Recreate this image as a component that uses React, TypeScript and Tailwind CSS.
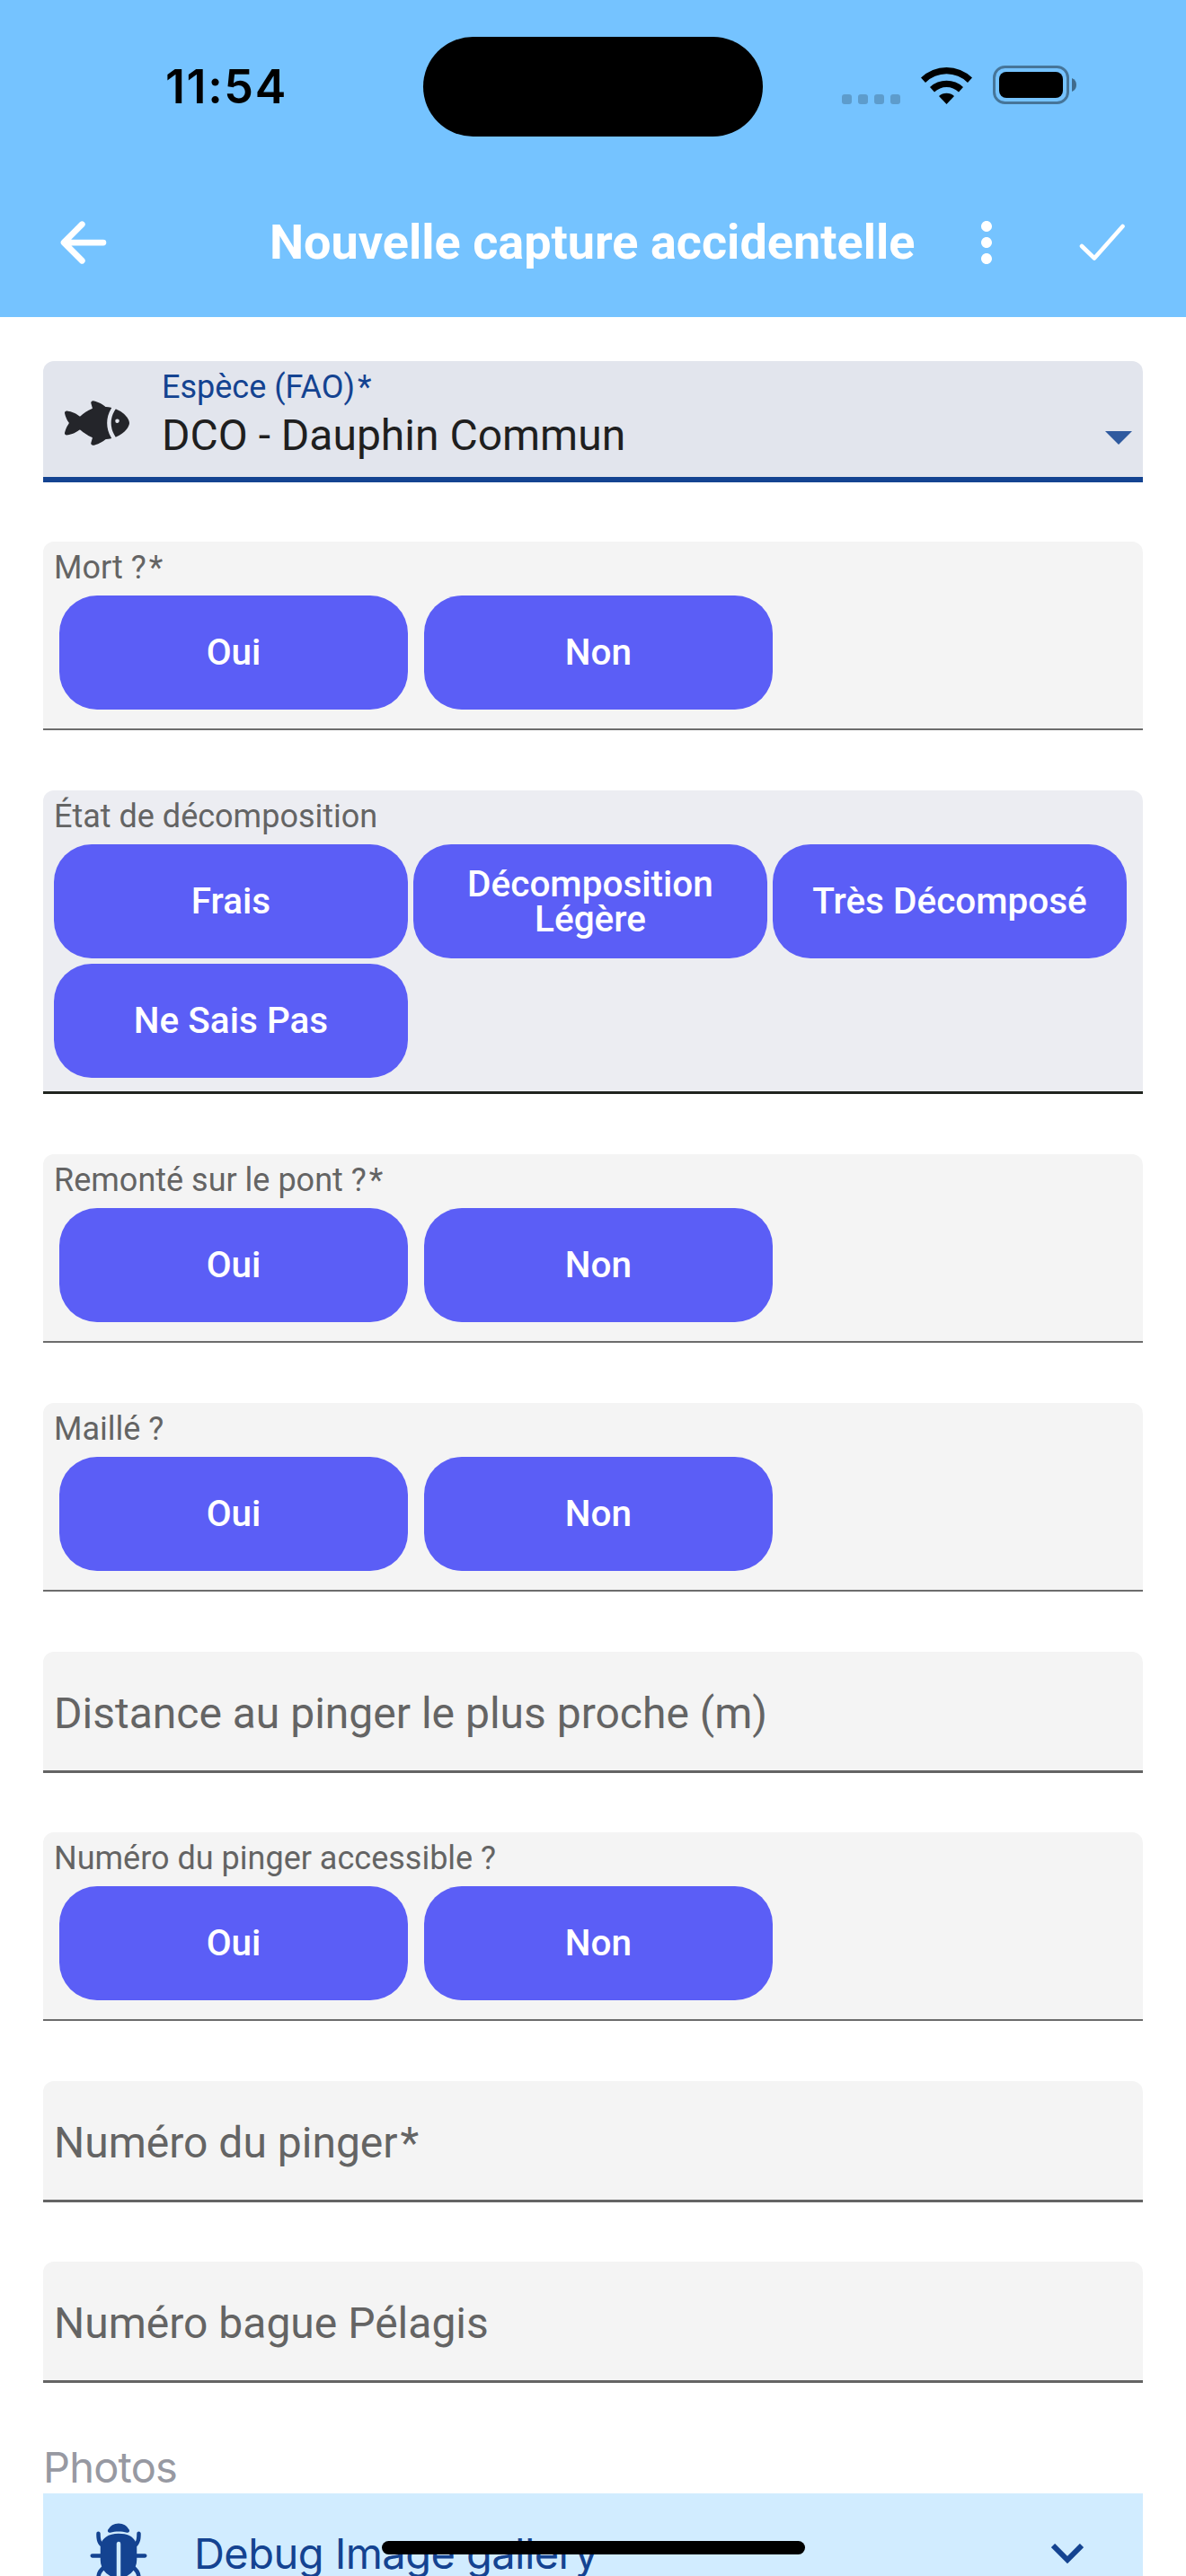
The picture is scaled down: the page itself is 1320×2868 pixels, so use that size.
import { IoArrowBack, IoFish, IoBug } from "react-icons/io5";
import { MdMoreVert } from "react-icons/md";

function StatusBar() {
  return (
    <div className="relative flex h-[187px] items-start">
      <span className="ml-[184px] mt-[65px] font-['Inter'] text-[52px] leading-[64px] font-semibold tracking-[1.6px] text-black">
        11:54
      </span>
      <div className="absolute left-[471px] top-[41px] h-[111px] w-[378px] rounded-full bg-black" />
      <div className="absolute left-[937px] top-[73px] flex items-end">
        <div className="flex gap-[7px]">
          {[0, 1, 2, 3].map((i) => (
            <span key={i} className="size-[11px] rounded-[3px] bg-black/20" />
          ))}
        </div>
        <svg className="ml-[23px] h-[42px] w-[57px]" viewBox="0 0 57 42">
          <path d="M0 12.6A41 41 0 0 1 57 12.6L52 18A33.5 33.5 0 0 0 5 18Z" />
          <path d="M10 23A27 27 0 0 1 47 23L42 28.5A19.5 19.5 0 0 0 15 28.5Z" />
          <path d="M20 33A13 13 0 0 1 37 33L28.5 42Z" />
        </svg>
        <svg className="ml-[23px] h-[43px] w-[93px]" viewBox="0 0 93 43">
          <rect x="1.5" y="1.5" width="82" height="40" rx="12" fill="none" stroke="#000" strokeOpacity=".4" strokeWidth="3" />
          <rect x="7" y="7" width="71" height="29" rx="8" />
          <path d="M88 14C91.5 15.5 93 18 93 21.5S91.5 27.5 88 29Z" opacity=".45" />
        </svg>
      </div>
    </div>
  );
}

function Header() {
  return (
    <header className="h-[353px] bg-[#75c3ff]">
      <StatusBar />
      <div className="flex h-[166px] items-center pl-[57px] text-white">
        <IoArrowBack className="size-[72px] shrink-0" />
        <h1 className="ml-[171px] w-[762px] text-[54px] font-bold leading-[64px] whitespace-nowrap">
          Nouvelle capture accidentelle
        </h1>
        <MdMoreVert className="size-[72px] shrink-0" />
        <svg
          className="ml-[67px] h-[42px] w-[52px]"
          viewBox="0 0 52 42"
          fill="none"
          stroke="#fff"
          strokeWidth="4.6"
          strokeLinecap="round"
          strokeLinejoin="round"
        >
          <path d="M3 25L17 38.5L48.5 3" />
        </svg>
      </div>
    </header>
  );
}

const choiceButton =
  "flex h-[127px] items-center justify-center rounded-[42px] bg-[#5b5ef6] px-[30px] text-center text-[40.5px] font-medium leading-[39px] text-white";

function Label({ text, required }: { text: string; required?: boolean }) {
  return (
    <>
      {text}
      {required && <span className="ml-[3px]">*</span>}
    </>
  );
}

type FieldProps = { label: string; required?: boolean; className?: string };

function YesNoField({ label, required, className = "" }: FieldProps) {
  return (
    <div className={"h-[210px] rounded-t-[12px] border-b-2 border-[#6c6c6c] bg-[#f4f4f4] px-[12px] pt-[6px] " + className}>
      <div className="h-[54px] text-[36px] leading-[46px] text-[#646464]">
        <Label text={label} required={required} />
      </div>
      <div className="flex gap-[18px] pl-[6px]">
        <button className={choiceButton + " w-[388px]"}>Oui</button>
        <button className={choiceButton + " w-[388px]"}>Non</button>
      </div>
    </div>
  );
}

function TextField({ label, required, className = "" }: FieldProps) {
  return (
    <div
      className={
        "flex h-[135px] items-center rounded-t-[12px] border-b-3 border-[#646464] bg-[#f4f4f4] px-[12px] pt-[6px] text-[48px] leading-[60px] text-[#646464] " +
        className
      }
    >
      <Label text={label} required={required} />
    </div>
  );
}

export default function App() {
  return (
    <div className="relative h-[2868px] w-[1320px] overflow-hidden bg-white font-['Roboto',sans-serif]">
      <Header />
      <main className="flex flex-col gap-[67px] px-[48px] pt-[49px]">
        <div className="-mb-px flex h-[135px] rounded-t-[12px] border-b-6 border-[#144391] bg-[#e2e5ed] pl-[24px] pr-[12px]">
          <IoFish className="mt-[33px] size-[72px] text-[#24252a]" />
          <div className="ml-[36px] flex-1">
            <div className="mt-[6px] text-[36px] leading-[46px] text-[#144391]">
              <Label text="Espèce (FAO)" required />
            </div>
            <div className="mt-px text-[48px] leading-[60px] text-[#1f1f1f]">DCO - Dauphin Commun</div>
          </div>
          <svg className="mt-[78px] h-[15px] w-[30px]" viewBox="0 0 30 15">
            <path d="M0 0H30L15 15Z" fill="#2f5a9f" />
          </svg>
        </div>
        <YesNoField label="Mort ?" required />
        <div className="h-[338px] rounded-t-[12px] border-b-3 border-[#20241f] bg-[#ecedf2] px-[12px] pt-[6px]">
          <div className="h-[54px] text-[36px] leading-[46px] text-[#646464]">État de décomposition</div>
          <div className="grid grid-cols-[394px_394px_394px] gap-[6px]">
            {["Frais", "Décomposition Légère", "Très Décomposé", "Ne Sais Pas"].map((t) => (
              <button key={t} className={choiceButton}>
                {t}
              </button>
            ))}
          </div>
        </div>
        <YesNoField label="Remonté sur le pont ?" required />
        <YesNoField label="Maillé ?" />
        <TextField label="Distance au pinger le plus proche (m)" />
        <YesNoField label="Numéro du pinger accessible ?" className="-mt-px" />
        <TextField label="Numéro du pinger" required />
        <TextField label="Numéro bague Pélagis" className="-mt-px" />
        <section className="font-['Inter'] text-[47px]">
          <h2 className="h-[56px] leading-[54px] tracking-[-0.8px] text-[#9799a2]">Photos</h2>
          <div className="flex h-[130px] items-center bg-[#d1ecff] pl-[48px] text-[#144391]">
            <IoBug className="size-[72px]" />
            <span className="ml-[48px] mt-[4px] flex-1 tracking-[-0.55px]">Debug Image gallery</span>
            <svg className="mr-[66px] mt-[4px] h-[22px] w-[36px]" viewBox="0 0 36 22" fill="none" stroke="#144391" strokeWidth="6">
              <path d="M2 2L18 18L34 2" />
            </svg>
          </div>
        </section>
      </main>
      <div className="absolute left-[425px] top-[2829px] h-[15px] w-[471px] rounded-full bg-black" />
    </div>
  );
}
